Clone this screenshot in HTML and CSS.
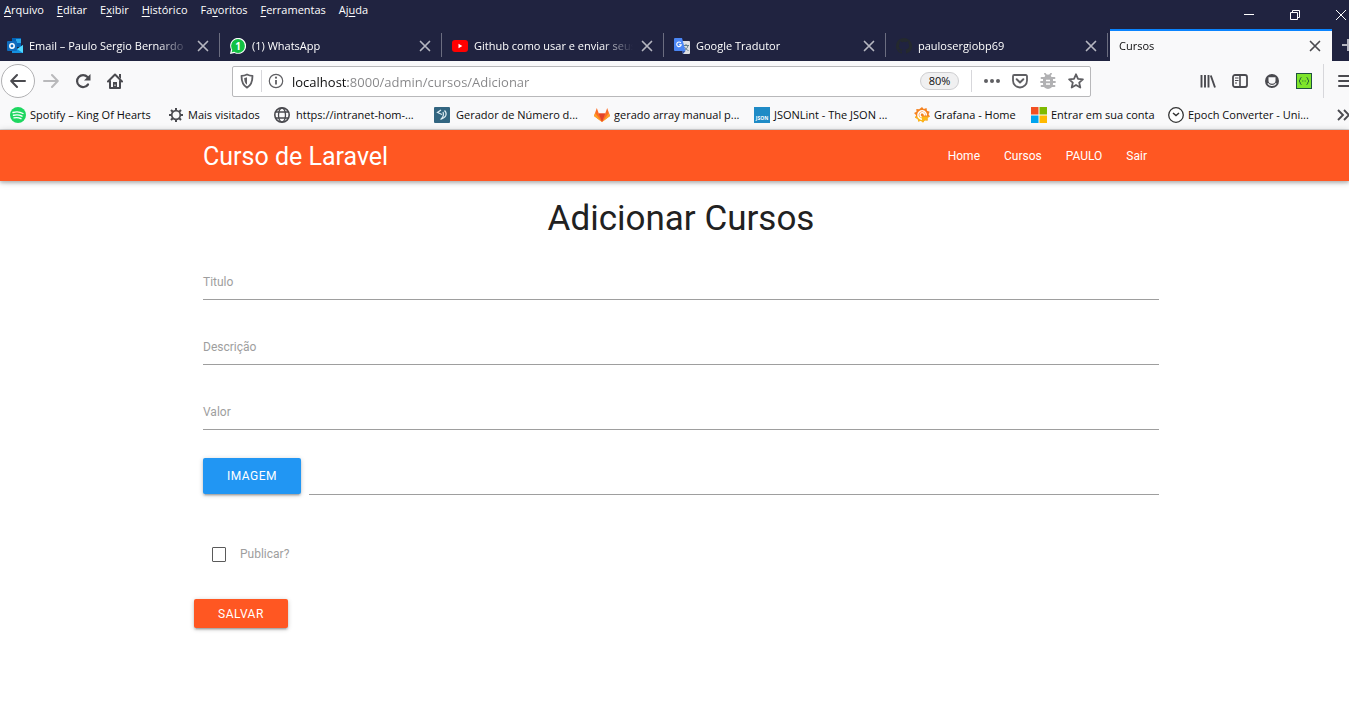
FILE: index.html
```html
<!DOCTYPE html>
<html lang="pt-BR">
<head>
<meta charset="utf-8">
<title>Cursos</title>
<link rel="stylesheet" href="styles.css">
</head>
<body>
<svg class="defs" aria-hidden="true">
  <symbol id="x" viewBox="0 0 16 16"><path d="M3.500 3.500l9 9M12.500 3.500l-9 9" fill="none" stroke="currentColor" stroke-width="1.700" stroke-linecap="round"/></symbol>
</svg>
<header class="browser">
  <div class="titlebar">
    <nav class="menu" aria-label="Menu">
      <button><u>A</u>rquivo</button><button><u>E</u>ditar</button><button>E<u>x</u>ibir</button><button><u>H</u>istórico</button><button>Fa<u>v</u>oritos</button><button><u>F</u>erramentas</button><button>Aj<u>u</u>da</button>
    </nav>
    <div class="window-buttons">
      <button aria-label="Minimizar"><svg viewBox="0 0 12 12"><path d="M1 5.500h10" stroke="currentColor"/></svg></button>
      <button aria-label="Restaurar"><svg viewBox="0 0 12 12"><path d="M1.500 3.500h7v7h-7zM3.500 3.500v-2h7v7h-2" fill="none" stroke="currentColor"/></svg></button>
      <button aria-label="Fechar"><svg viewBox="0 0 12 12"><path d="M1 1l10 10M11 1L1 11" stroke="currentColor"/></svg></button>
    </div>
  </div>
  <div class="tabs">
    <div class="tab first">
      <svg class="ico" viewBox="0 0 16 16"><path d="M5 0h9v9H5z" fill="#0364b8"/><path d="M9 1h5v4H9z" fill="#28a8ea"/><path d="M5 7l5.500 4L16 7v8H5z" fill="#1490df"/><path d="M16 7v8l-6-4z" fill="#50d9ff"/><rect y="3" width="10" height="10" rx="1" fill="#0f6cbd"/><circle cx="5" cy="8" r="2.200" fill="none" stroke="#fff" stroke-width="1.500"/></svg>
      <button class="tab-label">Email – Paulo Sergio Bernardo</button>
      <button class="close" aria-label="Fechar aba"><svg><use href="#x"/></svg></button>
    </div>
    <div class="tab">
      <span class="ico whats"><svg viewBox="0 0 16 16"><path d="M0 16l1-4.500A8 8 0 1 1 4.500 15z" fill="#fff"/><circle cx="8" cy="8" r="6.900" fill="#12c143"/><path d="M1.500 14.500l1-3 2 2z" fill="#12c143"/></svg><b>1</b></span>
      <button class="tab-label">(1) WhatsApp</button>
      <button class="close" aria-label="Fechar aba"><svg><use href="#x"/></svg></button>
    </div>
    <div class="tab">
      <svg class="ico" viewBox="0 0 16 16"><rect y="2" width="16" height="12" rx="3" fill="#f00"/><path d="M6.500 5.800v4.400L10.300 8z" fill="#fff"/></svg>
      <button class="tab-label">Github como usar e enviar seus</button>
      <button class="close" aria-label="Fechar aba"><svg><use href="#x"/></svg></button>
    </div>
    <div class="tab">
      <svg class="ico" viewBox="0 0 16 16"><path d="M6 3h9a1 1 0 0 1 1 1v11a1 1 0 0 1-1 1H9z" fill="#dfe0e2"/><path d="M9 7.500h6M12 6v1.500M14 7.500c-.5 2.500-2 4-4 5M10.500 9c1 2 2.500 3 4 3.500" fill="none" stroke="#607d8b"/><path d="M1 0h7l3.500 13H1a1 1 0 0 1-1-1V1a1 1 0 0 1 1-1z" fill="#4a86f5"/><path d="M8 13h3.500L9 16z" fill="#3053ab"/><path d="M6.800 4.800A2.300 2.300 0 1 0 7.300 6.700H5" fill="none" stroke="#fff" stroke-width="1.100"/></svg>
      <button class="tab-label">Google Tradutor</button>
      <button class="close" aria-label="Fechar aba"><svg><use href="#x"/></svg></button>
    </div>
    <div class="tab">
      <svg class="ico" viewBox="0 0 16 16"><path fill="#24292e" d="M8 0C3.580 0 0 3.580 0 8c0 3.540 2.290 6.530 5.470 7.590.4.070.55-.17.55-.38v-1.490c-2.010.37-2.530-.49-2.690-.94-.09-.23-.48-.94-.82-1.130-.28-.15-.68-.52-.01-.53.63-.01 1.080.58 1.230.82.72 1.210 1.870.87 2.330.66.070-.52.28-.87.51-1.070-1.780-.2-3.640-.89-3.640-3.950 0-.87.31-1.590.82-2.150-.08-.2-.36-1.020.08-2.120 0 0 .67-.21 2.200.82a7.500 7.500 0 0 1 4 0c1.530-1.040 2.200-.82 2.200-.82.44 1.100.16 1.920.08 2.120.51.56.82 1.270.82 2.150 0 3.070-1.870 3.750-3.650 3.950.29.25.54.73.54 1.480v2.200c0 .21.15.46.55.38A8 8 0 0 0 8 0z"/></svg>
      <button class="tab-label">paulosergiobp69</button>
      <button class="close" aria-label="Fechar aba"><svg><use href="#x"/></svg></button>
    </div>
    <div class="tab active">
      <button class="tab-label">Cursos</button>
      <button class="close" aria-label="Fechar aba"><svg><use href="#x"/></svg></button>
    </div>
    <button class="new-tab" aria-label="Nova aba"><svg viewBox="0 0 16 16"><path d="M8 2v12M2 8h12" stroke="currentColor" stroke-width="2"/></svg></button>
  </div>
  <div class="toolbar">
    <div class="history">
      <button class="back" aria-label="Voltar"><svg viewBox="0 0 16 16"><path d="M15 8H1.500M7 2L1.200 8 7 14" fill="none" stroke="currentColor" stroke-width="2" stroke-linecap="round" stroke-linejoin="round"/></svg></button>
      <button class="off" aria-label="Avançar"><svg viewBox="0 0 16 16"><path d="M1 8h13.500M9 2l5.800 6L9 14" fill="none" stroke="currentColor" stroke-width="2" stroke-linecap="round" stroke-linejoin="round"/></svg></button>
      <button aria-label="Recarregar"><svg viewBox="0 0 16 16"><path d="M13 11.500A6 6 0 1 1 12.500 4" fill="none" stroke="currentColor" stroke-width="2.200" stroke-linecap="round"/><path d="M15.500 1v6.500H9z" fill="currentColor"/></svg></button>
      <button aria-label="Página inicial"><svg viewBox="0 0 16 16"><path d="M1 8.500L8 1.500l7 7M3 8v7h10V8" fill="none" stroke="currentColor" stroke-width="2" stroke-linecap="round" stroke-linejoin="round"/><path d="M12 1h2v5l-2-2zM6 9h4v6H6z" fill="currentColor"/><path d="M8 11.500v1.500" stroke="#fff"/></svg></button>
    </div>
    <div class="url">
      <button aria-label="Proteção"><svg viewBox="0 0 16 16"><path d="M8 1.500c2 1 3.800 1.300 5.500 1.300 0 6-1 9.500-5.500 11.800C3.500 12.300 2.500 8.800 2.500 2.800 4.200 2.800 6 2.500 8 1.500z" fill="none" stroke="currentColor" stroke-width="1.800" stroke-linejoin="round"/><path d="M8 4.200v7.600C5.800 10.200 5.300 8 5.200 5 6.300 5 7 4.700 8 4.200z" fill="currentColor"/></svg></button>
      <i class="sep"></i>
      <button aria-label="Informações"><svg viewBox="0 0 16 16"><circle cx="8" cy="8" r="6.700" fill="none" stroke="currentColor" stroke-width="1.200"/><path d="M8 7v4.500" stroke="currentColor" stroke-width="1.800"/><circle cx="8" cy="4.700" r="1.100" fill="currentColor"/></svg></button>
      <input type="text" value="localhost:8000/admin/cursos/Adicionar" aria-label="Endereço">
      <button class="zoom">80%</button>
      <i class="sep"></i>
      <div class="actions">
        <button aria-label="Ações"><svg viewBox="0 0 16 16"><g fill="currentColor"><circle cx="2" cy="8" r="2"/><circle cx="8" cy="8" r="2"/><circle cx="14" cy="8" r="2"/></g></svg></button>
        <button aria-label="Pocket"><svg viewBox="0 0 16 16"><path d="M2.200 2h11.600a1.200 1.200 0 0 1 1.200 1.200V7.500a7 7 0 0 1-14 0V3.200A1.200 1.200 0 0 1 2.200 2z" fill="none" stroke="currentColor" stroke-width="1.800"/><path d="M4.700 6.300L8 9.400l3.300-3.100" fill="none" stroke="currentColor" stroke-width="2" stroke-linecap="round" stroke-linejoin="round"/></svg></button>
        <button class="bug" aria-label="Depurar"><svg viewBox="0 0 16 16"><path d="M4.500 5a3.500 3.500 0 0 1 7 0zM3 5h10v6a5 5 0 0 1-10 0z" fill="currentColor"/><path d="M1.500 5h13M1 9h14M1.500 13h13M5 .8l1.500 2M11 .8l-1.500 2" stroke="currentColor" stroke-width="1.800" stroke-linecap="round"/><path d="M6 7.500h4M6 11h4" stroke="#fff" stroke-width="1.300"/></svg></button>
        <button aria-label="Favoritar"><svg viewBox="0 0 16 16"><path d="M8 1.300l2 4.500 4.900.5-3.700 3.300 1.100 4.900L8 12l-4.300 2.500 1.100-4.900L1.100 6.300 6 5.800z" fill="none" stroke="currentColor" stroke-width="1.800" stroke-linejoin="round"/></svg></button>
      </div>
    </div>
    <div class="tools">
      <button aria-label="Biblioteca"><svg viewBox="0 0 16 16"><path d="M1.500 2v12.500M5 2v12.500M8.500 2v12.500M10.800 2.500l4.200 12" stroke="currentColor" stroke-width="1.900"/></svg></button>
      <button aria-label="Painel lateral"><svg viewBox="0 0 16 16"><rect x="1" y="2" width="14" height="12" rx="2" fill="none" stroke="currentColor" stroke-width="1.800"/><path d="M8 2v12" stroke="currentColor" stroke-width="1.600"/><path d="M3 5h3.500M3 7.500h3.500M3 10h2" stroke="currentColor"/></svg></button>
      <button aria-label="Conta"><svg viewBox="0 0 16 16"><circle cx="8" cy="8" r="7" fill="currentColor"/><path d="M4.500 4.200h7v3.300a3.500 3.200 0 0 1-7 0z" fill="#f9f9fa"/><path d="M3.800 10.400c2 2.800 6.400 2.800 8.400 0" fill="none" stroke="#f9f9fa" stroke-width="1.200"/></svg></button>
      <button aria-label="JSON"><svg viewBox="0 0 16 16"><rect x=".5" y=".5" width="15" height="15" fill="#7ee52b" stroke="#1f5140"/><path d="M5.500 4.500C3.500 4.500 5 7 3 8c2 1 .5 3.500 2.500 3.500M10.500 4.500c2 0 .5 2.500 2.500 3.500-2 1-.5 3.500-2.500 3.500M6.300 8h1M8.700 8h1" fill="none" stroke="#27603c"/></svg></button>
      <i class="sep"></i>
      <button class="burger" aria-label="Abrir menu"><svg viewBox="0 0 16 16"><path d="M1 3h14M1 8h14M1 13h14" stroke="currentColor" stroke-width="2" stroke-linecap="round"/></svg></button>
    </div>
  </div>
  <nav class="bookmarks" aria-label="Favoritos">
    <a href="#"><svg class="ico" viewBox="0 0 16 16"><circle cx="8" cy="8" r="8" fill="#1ed760"/><path d="M3 5.500c3.500-1 7-.7 10 1M3.500 8.300c3-.8 6-.5 8.500.9M4 10.900c2.500-.6 4.800-.4 7 .8" fill="none" stroke="#fff" stroke-width="1.400" stroke-linecap="round"/></svg><span>Spotify – King Of Hearts</span></a>
    <a href="#"><svg class="ico" viewBox="0 0 16 16"><circle cx="8" cy="8" r="4.300" fill="none" stroke="#4a4a4f" stroke-width="1.700"/><path d="M8 1v3M8 12v3M1 8h3M12 8h3M3 3l2 2M11 11l2 2M13 3l-2 2M5 11l-2 2" stroke="#4a4a4f" stroke-width="2"/></svg><span>Mais visitados</span></a>
    <a href="#"><svg class="ico" viewBox="0 0 16 16"><g fill="none" stroke="#4a4a4f" stroke-width="1.300"><circle cx="8" cy="8" r="7.200" stroke-width="1.600"/><ellipse cx="8" cy="8" rx="3.500" ry="7"/><path d="M1.500 5h13M1.500 11h13"/></g></svg><span>https://intranet-hom-...</span></a>
    <a href="#"><svg class="ico" viewBox="0 0 16 16"><rect width="16" height="16" rx="1" fill="#326580"/><path d="M7 3L3.500 5.500 8 7.500M10.500 3.500c3 3 2 7-4 9M9 5c1 3 .5 5-2 7" fill="none" stroke="#dcebf2" stroke-width="1.200"/></svg><span>Gerador de Número d...</span></a>
    <a href="#"><svg class="ico" viewBox="0 0 16 16"><path d="M8 15L0 9l2.800-8 2 5.500h6.400l2-5.500L16 9z" fill="#fc6d26"/><path d="M8 15L4.800 6.500h6.400z" fill="#e24329"/><path d="M0 9l1.100-3L8 15zM16 9l-1.100-3L8 15z" fill="#fca326"/></svg><span>gerado array manual p...</span></a>
    <a href="#"><span class="ico json">JSON</span><span>JSONLint - The JSON ...</span></a>
    <a href="#"><svg class="ico" viewBox="0 0 16 16"><path d="M8 0l1.800 2L12.500 1l.5 2.700 2.700 1-1.200 2.500L16 9.500l-2.500 1.300.1 2.700-2.800-.2L9 15.600l-2-1.900-2.800.9-.5-2.800L1 10.700l1.200-2.500L0 6l2.500-1.200L2.300 2 5.200 2.300z" fill="#f58220"/><path d="M1 10.700l2.700 1.100.5 2.800 2.800-.9 2 1.900 1.800-2.300 2.800.2-.1-2.700L16 9.500H1.600z" fill="#fbb818"/><path d="M12.300 8.500A4.200 4.200 0 1 0 8 12.200M10.300 8.600A2.200 2.200 0 1 0 7.600 10" fill="none" stroke="#fff" stroke-width="1.500"/></svg><span>Grafana - Home</span></a>
    <a href="#"><svg class="ico" viewBox="0 0 16 16"><path d="M0 0h7.500v7.500H0z" fill="#f25022"/><path d="M8.500 0H16v7.500H8.500z" fill="#7fba00"/><path d="M0 8.500h7.500V16H0z" fill="#00a4ef"/><path d="M8.500 8.500H16V16H8.500z" fill="#ffb900"/></svg><span>Entrar em sua conta</span></a>
    <a href="#"><svg class="ico" viewBox="0 0 16 16"><circle cx="8" cy="8" r="7.300" fill="#fff" stroke="#333" stroke-width="1.300"/><path d="M5 6l3 2.500L11 6" fill="none" stroke="#333" stroke-width="1.500"/></svg><span>Epoch Converter - Uni...</span></a>
    <button aria-label="Mais favoritos"><svg viewBox="0 0 16 16"><path d="M3 3l5 5-5 5M9 3l5 5-5 5" fill="none" stroke="#4a4a4f" stroke-width="1.900"/></svg></button>
  </nav>
</header>
<div class="page">
  <header class="site-header">
    <a class="brand" href="#">Curso de Laravel</a>
    <nav><a href="#">Home</a><a href="#">Cursos</a><a href="#">PAULO</a><a href="#">Sair</a></nav>
  </header>
  <main>
    <h1>Adicionar Cursos</h1>
    <form>
      <div class="field"><label for="titulo">Titulo</label><input id="titulo" type="text"></div>
      <div class="field"><label for="descricao">Descrição</label><input id="descricao" type="text"></div>
      <div class="field"><label for="valor">Valor</label><input id="valor" type="text"></div>
      <div class="file-row"><button type="button" class="btn blue">IMAGEM</button><input type="text" aria-label="Imagem"></div>
      <div class="check"><input id="publicar" type="checkbox"><label for="publicar">Publicar?</label></div>
      <button class="btn save">SALVAR</button>
    </form>
  </main>
</div>
</body>
</html>
```
FILE: styles.css
```css
* { box-sizing: border-box; }
body {
  margin: 0;
  min-height: 100vh;
  overflow-x: hidden;
  background: #fff;
  font: 12px/16px "Open Sans", "Noto Sans", sans-serif;
  color: #0c0c0d;
}
button { border: 0; padding: 0; background: none; font: inherit; color: inherit; }
a { color: inherit; text-decoration: none; }
svg { display: block; width: 16px; height: 16px; }
.defs { position: absolute; width: 0; height: 0; }
.ico { flex: none; width: 16px; height: 16px; }
.sep { flex: none; width: 1px; height: 22px; background: #d7d7db; }

/* Browser frame */
.browser {
  overflow: hidden;
  border-bottom: 1px solid #d9d9db;
  background: #f9f9fa;
  font-size: 11px;
}
.titlebar { display: flex; justify-content: space-between; height: 29px; background: #202340; color: #fff; }
.menu { display: flex; gap: 13px; padding: 2px 4px; height: 20px; }
.menu u { text-underline-offset: 2px; }
.window-buttons { display: flex; gap: 34px; margin-right: 2px; }
.window-buttons svg { width: 12px; height: 12px; }

.tabs { display: flex; height: 32px; background: #202340; color: #fff; }
.tab {
  display: flex;
  flex: none;
  align-items: center;
  width: 222px;
  padding: 2px 9px 0 10px;
  gap: 6px;
  background: linear-gradient(#6b6d80, #6b6d80) right 4px / 1px 24px no-repeat;
}
.tab.first { width: 220px; padding-left: 7px; }
.tab.active {
  padding: 0 9px;
  margin-left: 2px;
  border-top: 2px solid #0a84ff;
  background: #f9f9fa;
  color: #0c0c0d;
}
.tab-label {
  flex: 1;
  min-width: 0;
  overflow: hidden;
  white-space: nowrap;
  text-align: left;
  mask-image: linear-gradient(to left, transparent, #000 32px);
}
.close { color: #b5b6c0; }
.active .close { color: #4a4a4f; }
.whats { display: grid; }
.whats > * { grid-area: 1 / 1; }
.whats b { z-index: 1; color: #fff; font-size: 10px; text-align: center; }
.new-tab { flex: none; margin-left: 8px; color: #b5b6c0; }

.toolbar { display: flex; align-items: center; height: 40px; color: #4a4a4f; }
.history { display: flex; align-items: center; gap: 16px; width: 232px; padding-left: 1px; }
.history .back {
  display: grid;
  place-items: center;
  width: 34px;
  height: 34px;
  margin-right: -8px;
  border: 1px solid #b1b1b3;
  border-radius: 50%;
  background: #fff;
}
.history .off { color: #b9b9bb; }
.url {
  display: flex;
  flex: 1;
  align-items: center;
  height: 31px;
  padding: 0 6px;
  border: 1px solid #b8b8ba;
  border-radius: 2px;
  background: #fff;
  color: #5f5f63;
}
.url > .sep { margin: 0 6px; }
.url input {
  flex: 1;
  min-width: 0;
  margin-left: 8px;
  padding: 2px 0 0;
  border: 0;
  outline: 0;
  font: 13px/20px "Open Sans", "Noto Sans", sans-serif;
  color: transparent;
  background: linear-gradient(90deg, #0c0c0d 56px, #858587 56px);
  -webkit-background-clip: text;
  background-clip: text;
}
.url .zoom {
  width: 39px;
  height: 18px;
  margin-right: 6px;
  border: 1px solid #cfcfd1;
  border-radius: 9px;
  background: #f0f0f1;
  color: #0c0c0d;
  line-height: 16px;
}
.actions { display: flex; gap: 12px; padding-left: 6px; }
.bug { color: #b1b1b3; }
.tools { display: flex; flex: none; align-items: center; gap: 16px; width: 258px; padding-left: 109px; }
.tools .sep { height: 34px; margin: 0 -5px 0 -5px; }
.tools button { flex: none; }
.tools .burger { margin-left: 3px; }

.bookmarks {
  display: grid;
  grid-template-columns: 158px 106px 160px 160px 160px 160px 117px 137px 167px 16px;
  align-items: center;
  height: 28px;
  padding-left: 10px;
  white-space: nowrap;
}
.bookmarks a { display: flex; gap: 4px; }
.bookmarks a:nth-child(n+3) { gap: 6px; }
.bookmarks a:nth-child(n+5) { gap: 4px; }
.json {
  padding-top: 8px;
  background: #1f8bc6;
  color: #fff;
  font: bold 5px/6px "Open Sans", sans-serif;
  text-align: center;
}

/* Page */
.page { font-family: Roboto, sans-serif; color: #212121; }
.site-header {
  display: flex;
  align-items: center;
  justify-content: space-between;
  height: 51px;
  padding: 0 190px 0 203px;
  background: #ff5722;
  color: #fff;
  box-shadow: 0 2px 3px rgba(0,0,0,.18), 0 1px 7px rgba(0,0,0,.22);
}
.brand { padding-top: 2px; font-size: 25px; line-height: 48px; }
.site-header nav { display: flex; gap: 24px; padding-right: 12px; }
main { padding: 18px 190px 0 203px; }
h1 { margin: 0 0 30px; font-size: 35px; line-height: 40px; font-weight: 400; text-align: center; }
.field { display: flex; flex-direction: column; margin-bottom: 34px; }
label { color: #9e9e9e; }
.field label { padding: 5px 0; line-height: 16px; }
.field input { height: 5px; }
.field input, .file-row input {
  width: 100%;
  padding: 0;
  border: 0;
  border-bottom: 1px solid #9e9e9e;
  outline: 0;
  background: transparent;
  font: 12px/16px Roboto, sans-serif;
}
.field:nth-child(3) { margin-bottom: 28px; }
.file-row { display: flex; gap: 8px; }
.file-row input { flex: 1; height: 37px; }
.btn {
  padding: 0 24px;
  border-radius: 2px;
  color: #fff;
  letter-spacing: 0.5px;
  box-shadow: 0 2px 2px rgba(0,0,0,.14), 0 3px 1px -2px rgba(0,0,0,.12), 0 1px 5px rgba(0,0,0,.2);
}
.blue { height: 36px; background: #2196f3; }
.check { display: flex; align-items: center; gap: 14px; margin: 51px 0 37px 9px; }
.check input { appearance: none; width: 14px; height: 15px; margin: 0; border: 1px solid #5a5a5a; border-radius: 1px; }
.save { height: 29px; margin-left: -9px; background: #ff5722; }
```
